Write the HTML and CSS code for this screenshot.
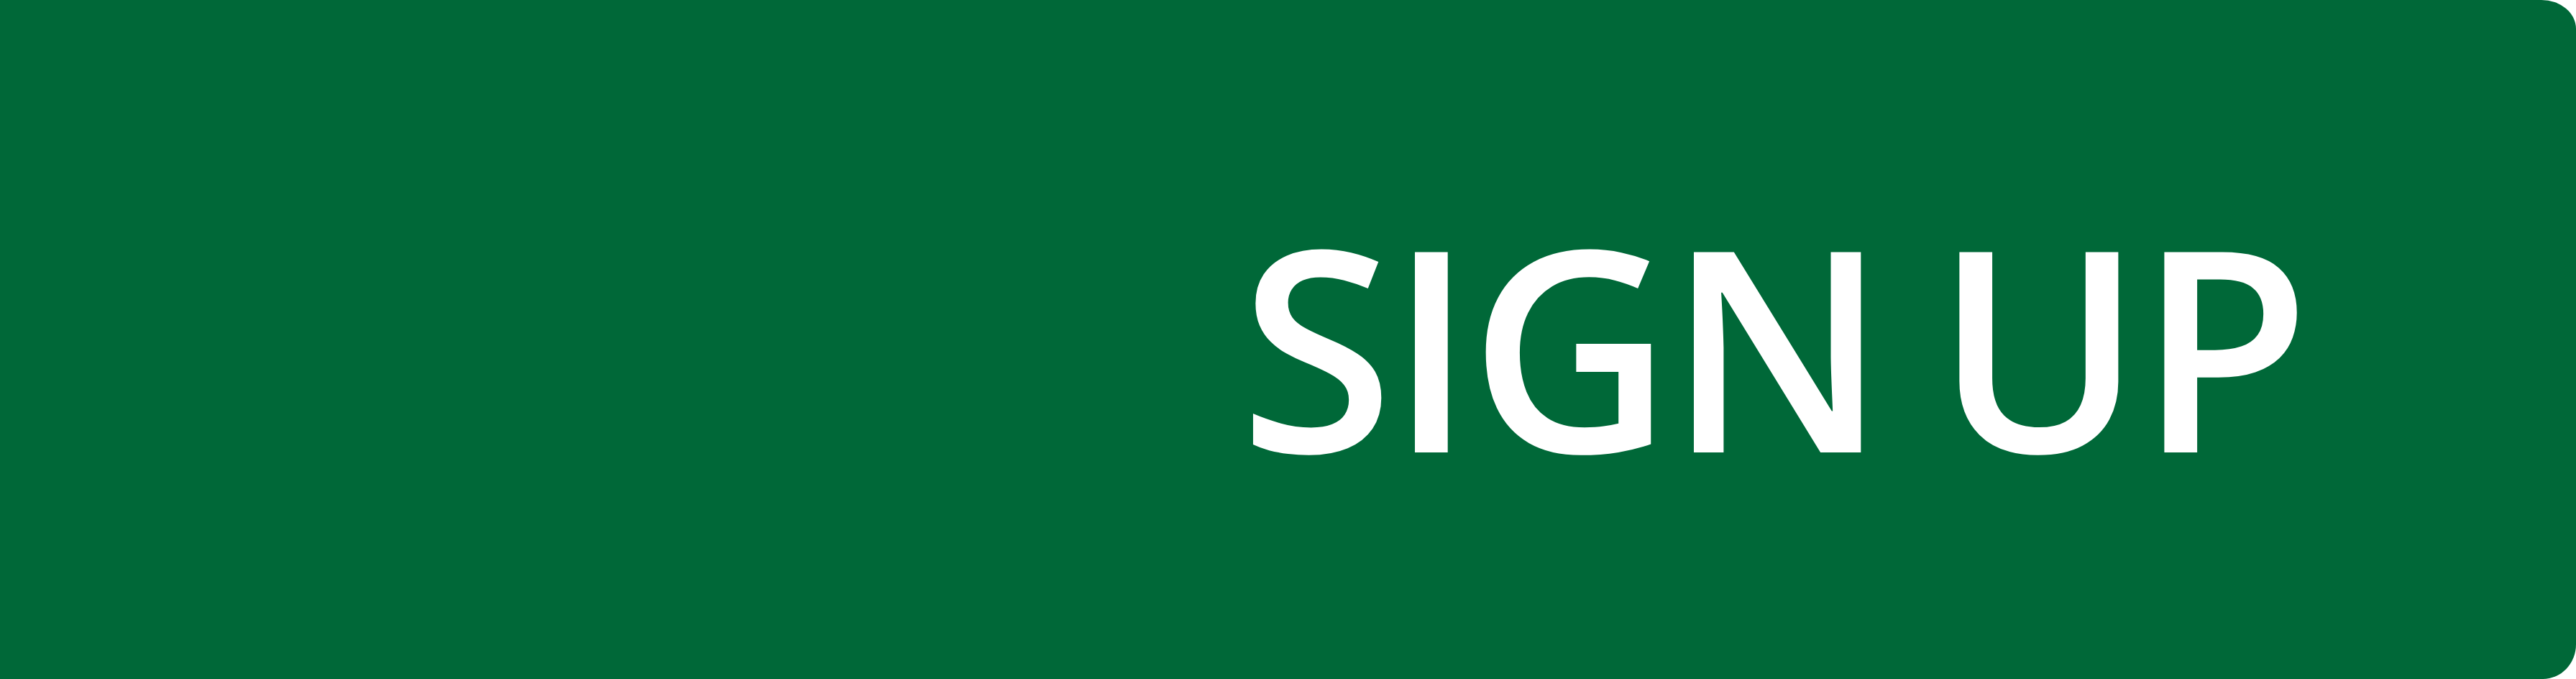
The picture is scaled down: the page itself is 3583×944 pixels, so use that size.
FILE: index.html
```html
<!DOCTYPE html>
<html lang="en">
<head>
<meta charset="utf-8">
<title>Sign up</title>
<link rel="stylesheet" href="styles.css">
</head>
<body>
<a class="signup-button" href="#">
  <span class="signup-label">SIGN UP</span>
</a>
</body>
</html>
```
FILE: styles.css
```css
html, body {
  margin: 0;
  padding: 0;
  background: #ffffff;
}

.signup-button {
  display: block;
  box-sizing: border-box;
  width: 3583px;
  height: 944px;
  padding: 283px 0 0 1724px;
  background: #006838;
  border-radius: 0 48px 46px 0 / 0 40px 48px 0;
  text-decoration: none;
  overflow: hidden;
}

.signup-label {
  display: block;
  font-family: "Open Sans", "Liberation Sans", sans-serif;
  font-weight: 600;
  font-size: 390px;
  line-height: 1;
  color: #ffffff;
  white-space: nowrap;
  letter-spacing: -7px;
  word-spacing: -21px;
}
```
